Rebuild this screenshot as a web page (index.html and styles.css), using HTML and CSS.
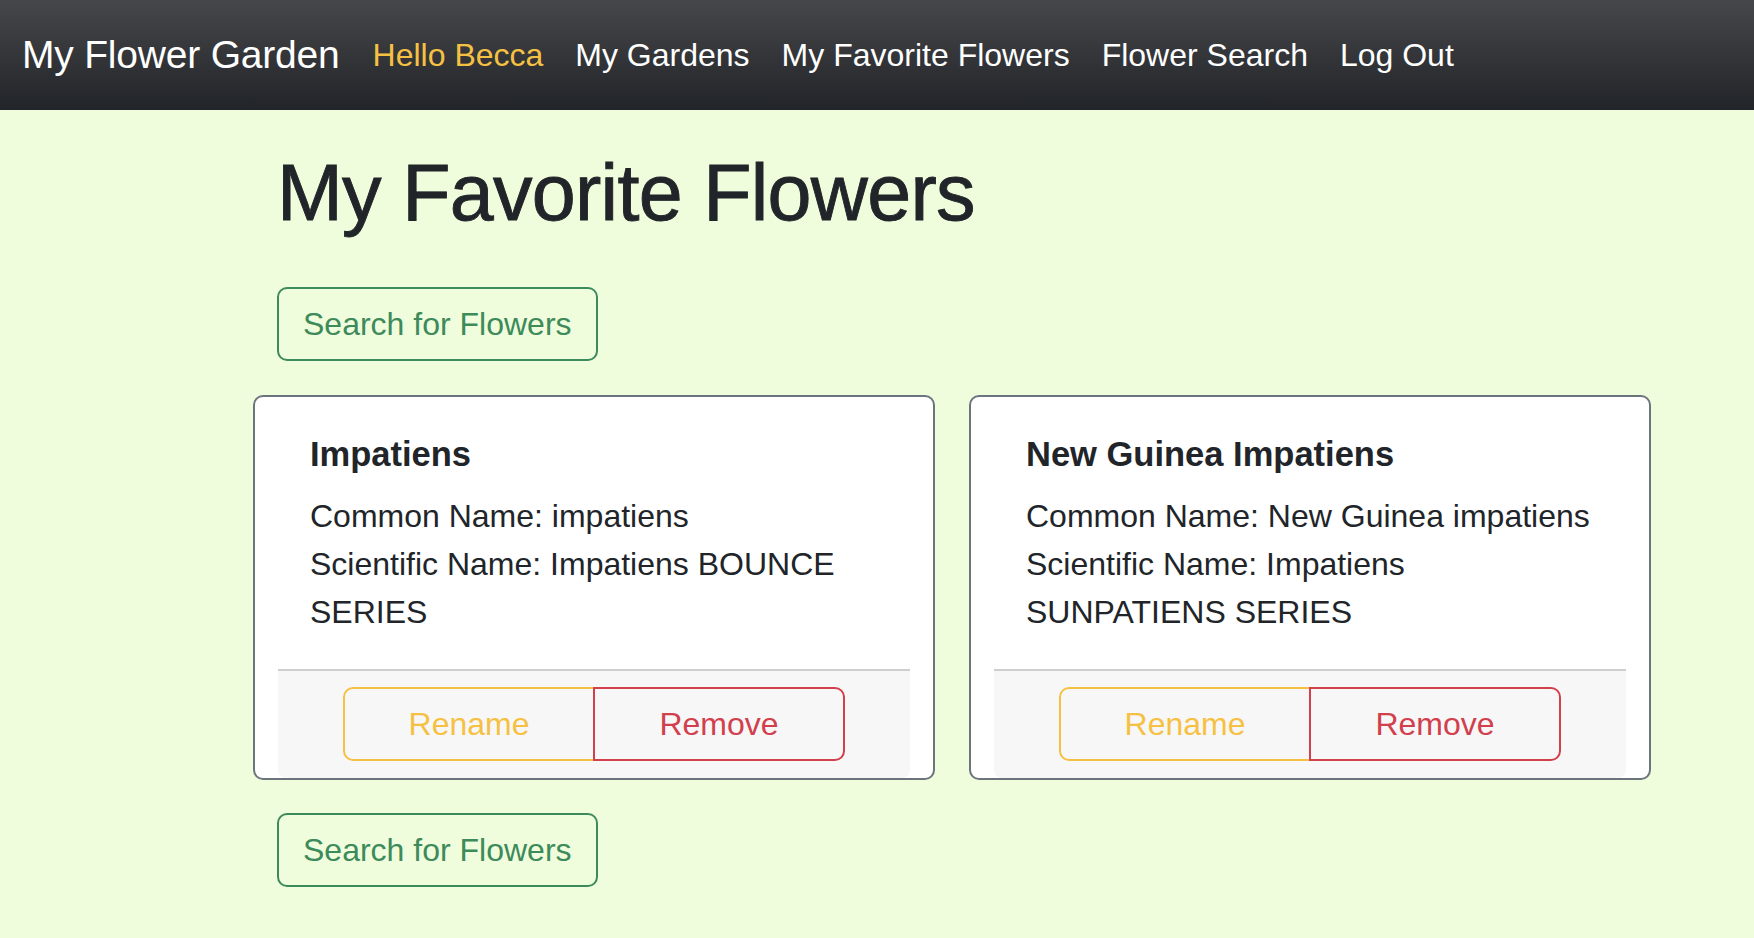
FILE: index.html
```html
<!DOCTYPE html>
<html lang="en">
<head>
<meta charset="utf-8">
<title>My Favorite Flowers</title>
<link rel="stylesheet" href="styles.css">
</head>
<body>
<nav class="navbar">
  <a class="brand" href="#">My Flower Garden</a>
  <a class="nav-link greeting" href="#">Hello Becca</a>
  <a class="nav-link" href="#">My Gardens</a>
  <a class="nav-link" href="#">My Favorite Flowers</a>
  <a class="nav-link" href="#">Flower Search</a>
  <a class="nav-link" href="#">Log Out</a>
</nav>
<main class="main">
  <h1 class="page-title">My Favorite Flowers</h1>
  <a class="btn-search" href="#">Search for Flowers</a>
  <div class="cards">
    <div class="card">
      <div class="card-body">
        <h5 class="card-title">Impatiens</h5>
        <p class="card-text">Common Name: impatiens<br>Scientific Name: Impatiens BOUNCE SERIES</p>
      </div>
      <div class="card-footer">
        <div class="btn-group">
          <button class="btn btn-rename">Rename</button>
          <button class="btn btn-remove">Remove</button>
        </div>
      </div>
    </div>
    <div class="card">
      <div class="card-body">
        <h5 class="card-title">New Guinea Impatiens</h5>
        <p class="card-text">Common Name: New Guinea impatiens<br>Scientific Name: Impatiens SUNPATIENS SERIES</p>
      </div>
      <div class="card-footer">
        <div class="btn-group">
          <button class="btn btn-rename">Rename</button>
          <button class="btn btn-remove">Remove</button>
        </div>
      </div>
    </div>
  </div>
  <a class="btn-search btn-search-bottom" href="#">Search for Flowers</a>
</main>
</body>
</html>
```
FILE: styles.css
```css
* { box-sizing: border-box; }

body {
  margin: 0;
  background: #f0fddc;
  color: #212529;
  font-family: "Liberation Sans", Arial, sans-serif;
  min-height: 938px;
}

a { text-decoration: none; }

.navbar {
  height: 110px;
  display: flex;
  align-items: center;
  padding-left: 22px;
  background: linear-gradient(180deg, #46474b 0%, #212428 100%);
}

.brand {
  color: #ffffff;
  font-size: 39px;
  line-height: 60px;
  letter-spacing: -0.2px;
  margin-right: 17px;
  white-space: nowrap;
}

.nav-link {
  color: #ffffff;
  font-size: 32px;
  line-height: 48px;
  padding: 0 16px;
  white-space: nowrap;
}

.nav-link.greeting { color: #f6c143; }

.main {
  padding-left: 277px;
  padding-bottom: 40px;
}

.page-title {
  margin: 35px 0 0 0;
  font-size: 79px;
  line-height: 95px;
  font-weight: 400;
  letter-spacing: -0.7px;
  -webkit-text-stroke: 0.9px #212529;
}

.btn-search {
  display: inline-block;
  margin-top: 47px;
  padding: 11px 24px;
  border: 2px solid #3d8a5b;
  border-radius: 10px;
  color: #3d8a5b;
  font-size: 32px;
  line-height: 48px;
}

.btn-search-bottom { margin-top: 33px; }

.cards {
  display: flex;
  gap: 34px;
  margin-top: 34px;
  margin-left: -24px;
}

.card {
  width: 682px;
  border: 2px solid #6c757d;
  border-radius: 10px;
  background: #ffffff;
  padding: 0 23px;
}

.card-body {
  padding: 37px 28px 33px 32px;
}

.card-title {
  margin: 0 0 17px 0;
  font-size: 34.5px;
  line-height: 41px;
  font-weight: 700;
  letter-spacing: 0;
}

.card-text {
  margin: 0;
  font-size: 32px;
  line-height: 48px;
}

.card-footer {
  background: #f7f7f7;
  border-top: 2px solid #cfcfcf;
  border-radius: 0 0 8px 8px;
  padding: 16px 0 17px;
  display: flex;
  justify-content: center;
}

.btn-group {
  display: flex;
}

.btn {
  width: 252px;
  padding: 11px 0;
  background: transparent;
  font-family: "Liberation Sans", Arial, sans-serif;
  font-size: 32px;
  line-height: 48px;
  border: 2px solid;
  cursor: pointer;
}

.btn-rename {
  color: #f6c143;
  border-color: #f6c143;
  border-radius: 10px 0 0 10px;
}

.btn-remove {
  color: #d2404d;
  border-color: #d2404d;
  border-radius: 0 10px 10px 0;
  margin-left: -2px;
}
```
